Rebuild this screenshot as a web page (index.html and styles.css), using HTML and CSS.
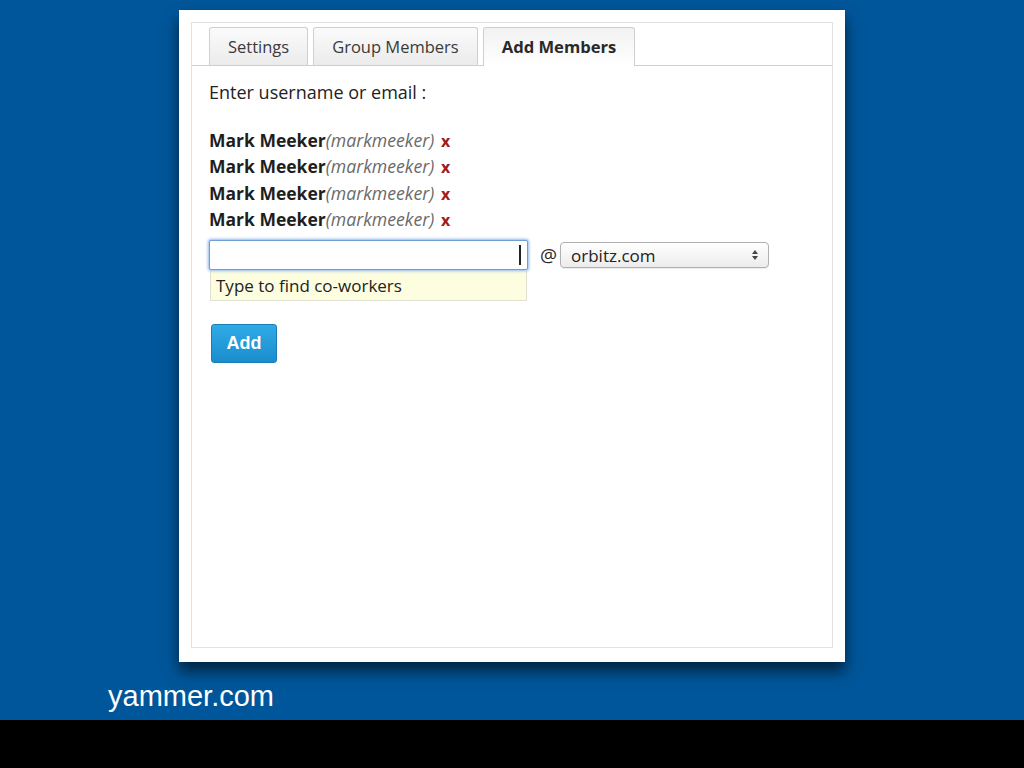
FILE: index.html
```html
<!DOCTYPE html>
<html>
<head>
<meta charset="utf-8">
<link rel="stylesheet" href="styles.css">
</head>
<body>
<div class="stage">
  <div class="card">
    <div class="panel">
      <div class="tabs">
        <div class="tab">Settings</div>
        <div class="tab">Group Members</div>
        <div class="tab active">Add Members</div>
      </div>
      <div class="content">
        <div class="label">Enter username or email :</div>
        <ul class="members">
          <li><b class="name">Mark Meeker</b><i class="user">(markmeeker)</i> <span class="remove">x</span></li>
          <li><b class="name">Mark Meeker</b><i class="user">(markmeeker)</i> <span class="remove">x</span></li>
          <li><b class="name">Mark Meeker</b><i class="user">(markmeeker)</i> <span class="remove">x</span></li>
          <li><b class="name">Mark Meeker</b><i class="user">(markmeeker)</i> <span class="remove">x</span></li>
        </ul>
        <div class="entry">
          <div class="field">
            <div class="input"><span class="caret"></span></div>
            <div class="hint">Type to find co-workers</div>
          </div>
          <span class="at">@</span>
          <div class="select"><span>orbitz.com</span><span class="arrows"><span class="up"></span><span class="down"></span></span></div>
        </div>
        <div class="button">Add</div>
      </div>
    </div>
  </div>
  <div class="caption">yammer.com</div>
</div>
<div class="footer"></div>
</body>
</html>
```
FILE: styles.css
```css
html, body {
  margin: 0;
  padding: 0;
}
body {
  width: 1024px;
  height: 768px;
  background: #000;
  font-family: "Open Sans", "DejaVu Sans", sans-serif;
  overflow: hidden;
}
.stage {
  height: 720px;
  background: #00569a;
  box-sizing: border-box;
  padding-top: 10px;
  display: flex;
  flex-direction: column;
}
.card {
  margin-left: 179px;
  width: 666px;
  height: 652px;
  box-sizing: border-box;
  background: #fff;
  padding: 12px 12px 14px 12px;
  box-shadow: 0 9px 14px rgba(0, 0, 0, 0.6);
}
.panel {
  height: 100%;
  box-sizing: border-box;
  border: 1px solid #e2e2e2;
  display: flex;
  flex-direction: column;
}
.tabs {
  display: flex;
  gap: 5px;
  padding: 4px 0 0 17px;
  border-bottom: 1px solid #cfcfcf;
  height: 43px;
  box-sizing: border-box;
}
.tab {
  height: 38px;
  box-sizing: border-box;
  border: 1px solid #cfcfcf;
  border-bottom: none;
  border-radius: 3px 3px 0 0;
  background: linear-gradient(#fbfbfb, #ebebeb);
  color: #3a3a3a;
  font-size: 16.5px;
  line-height: 38px;
  padding: 0 18px;
  margin-bottom: -1px;
}
.tab.active {
  background: linear-gradient(#f2f2f2, #ffffff);
  font-weight: bold;
  color: #2a2a2a;
  height: 39px;
  padding: 0 18px;
  font-size: 16.6px;
}
.content {
  padding: 14px 0 0 17px;
  color: #222;
}
.label {
  font-size: 18px;
  line-height: 24px;
}
.members {
  list-style: none;
  margin: 23px 0 0 0;
  padding: 0;
}
.members li {
  font-size: 17.5px;
  line-height: 26.3px;
  height: 26.3px;
}
.name {
  font-weight: bold;
  color: #1e1e1e;
}
.user {
  color: #6a6a6a;
  font-size: 17.7px;
}
.remove {
  color: #a4191d;
  font-weight: bold;
  font-size: 16px;
  margin-left: 2px;
}
.entry {
  margin-top: 8px;
  display: flex;
  align-items: flex-start;
}
.field {
  width: 319px;
}
.input {
  height: 30px;
  box-sizing: border-box;
  border: 1px solid #6f9fd6;
  box-shadow: 0 0 3px 1px #8cb6ea;
  border-radius: 2px;
  background: #fff;
  position: relative;
}
.caret {
  position: absolute;
  right: 6px;
  top: 4px;
  width: 2px;
  height: 20px;
  background: #222;
}
.hint {
  margin: 1px 1px 0 1px;
  height: 30px;
  box-sizing: border-box;
  background: #fdfde0;
  border: 1px solid #e0e0d0;
  border-top: none;
  font-size: 17px;
  line-height: 29px;
  padding-left: 5px;
  color: #222;
}
.at {
  margin-left: 12px;
  font-size: 19px;
  line-height: 30px;
  color: #2a2a2a;
}
.select {
  margin: 2px 0 0 3px;
  width: 209px;
  height: 26px;
  box-sizing: border-box;
  border: 1px solid #b0b0b0;
  border-radius: 4px;
  background: linear-gradient(#ffffff, #ececec);
  box-shadow: 0 1px 1px rgba(0,0,0,0.08);
  display: flex;
  align-items: center;
  justify-content: space-between;
  padding: 0 10px 0 10px;
  font-size: 17px;
  color: #222;
}
.arrows {
  display: flex;
  flex-direction: column;
  gap: 2px;
}
.up, .down {
  width: 0;
  height: 0;
  border-left: 3px solid transparent;
  border-right: 3px solid transparent;
}
.up { border-bottom: 4px solid #444; }
.down { border-top: 4px solid #444; }
.button {
  margin: 23px 0 0 2px;
  width: 66px;
  height: 39px;
  box-sizing: border-box;
  border: 1px solid #1b7bb5;
  border-radius: 3px;
  background: linear-gradient(#30abe6, #1a8dcd);
  color: #fff;
  font-family: "Liberation Sans", Arial, sans-serif;
  font-weight: bold;
  font-size: 18px;
  line-height: 36px;
  text-align: center;
}
.caption {
  margin: 17px 0 0 108px;
  color: #fff;
  font-family: "Liberation Sans", Arial, sans-serif;
  font-size: 29px;
  line-height: 34px;
}
.footer {
  height: 48px;
  background: #000;
}
```
